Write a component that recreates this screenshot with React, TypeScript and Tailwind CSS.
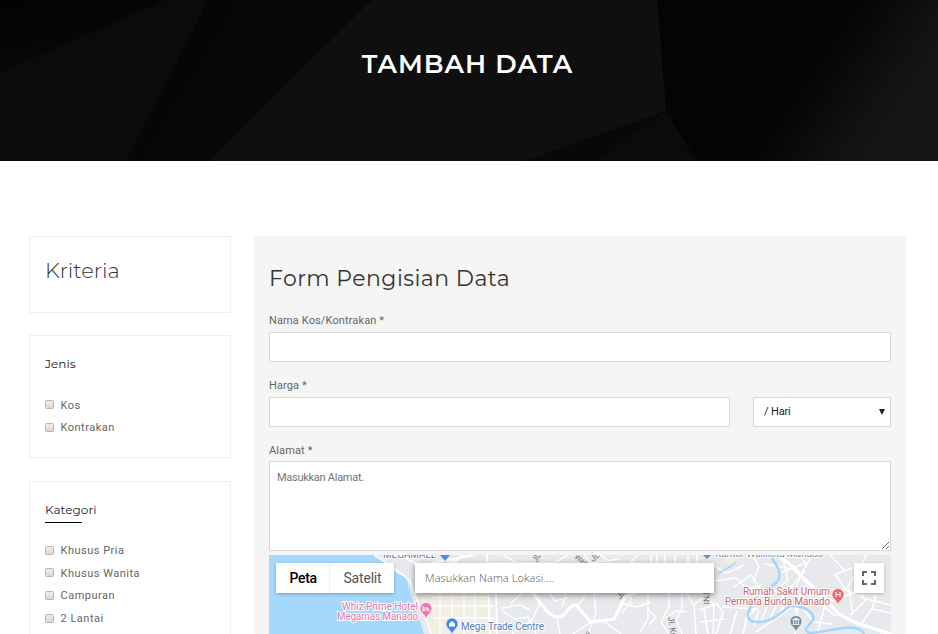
import React from "react";

const heading = "font-['Montserrat','Inter',sans-serif]";

function Backdrop() {
  return (
    <svg className="absolute inset-0 h-full w-full" viewBox="0 0 938 161" preserveAspectRatio="none" aria-hidden="true">
      <defs>
        <linearGradient id="leftFold" x1="0" y1="0" x2="0.35" y2="1">
          <stop offset="0" stopColor="#030303" />
          <stop offset="1" stopColor="#080808" />
        </linearGradient>
        <linearGradient id="band" x1="0" y1="0" x2="1" y2="0.4">
          <stop offset="0" stopColor="#040404" />
          <stop offset="1" stopColor="#090909" />
        </linearGradient>
        <linearGradient id="rightFold" gradientUnits="userSpaceOnUse" x1="805" y1="62" x2="900" y2="127">
          <stop offset="0" stopColor="#040404" />
          <stop offset="0.2" stopColor="#070707" />
          <stop offset="0.7" stopColor="#121212" />
          <stop offset="1" stopColor="#161616" />
        </linearGradient>
      </defs>
      <rect width="938" height="161" fill="#0f0f0f" />
      <path d="M0 0H210L126 161H0Z" fill="#0b0b0b" />
      <path d="M0 0H165L100 29L0 73Z" fill="url(#leftFold)" />
      <path d="M208 0H372L209 161H126Z" fill="url(#band)" />
      <path d="M657 0H938V161H696L666 111Z" fill="url(#rightFold)" />
      <path d="M666 111L696 161H525Z" fill="#0b0b0b" />
      <path d="M666 111L595 161H525Z" fill="#080808" />
    </svg>
  );
}

function Check({ label }: { label: string }) {
  return (
    <label className="flex h-[22.6px] items-center font-[Roboto] text-[11px] tracking-[0.5px] text-[#666]">
      <span className="mb-[2px] mr-[6.5px] h-[9px] w-[9px] rounded-[1.5px] border border-[#b4b4b4] bg-gradient-to-b from-[#eee] to-[#d9d9d9]" />
      {label}
    </label>
  );
}

function Pin({ x, y, color, children }: { x: number; y: number; color: string; children?: React.ReactNode }) {
  return (
    <g transform={`translate(${x} ${y})`}>
      <path d="M0 4.5C-1-1-6-2-6-6.5A6 6 0 0 1 6-6.5C6-2 1-1 0 4.5Z" fill={color} stroke="#fff" strokeWidth=".6" />
      {children}
    </g>
  );
}

function MapView() {
  return (
    <svg className="block h-[79px] w-[622px]" viewBox="269 555 622 79" fontFamily="Roboto, sans-serif" aria-label="Manado">
      <rect x="269" y="555" width="622" height="79" fill="#e8e9ec" />
      <path d="M269 555H374C382 560 389 565 396 573L407 578C409 594 417 610 424 634H269Z" fill="#a5d8fd" />
      <path d="M419 592L489 593L498 634H429Z" fill="#f1eee3" />
      <path d="M724 555h13l-2 6-10 1z" fill="#faf0cc" />
      <g fill="none" stroke="#fff" strokeWidth="2">
        <path d="M374 555C393 568 407 576 411 583C414 600 427 616 431 634" strokeWidth="1.4" />
        <path d="M402 555C422 572 447 567 464 555M431 563L475 555M462 555L450 568M487 555L490 634M496 590L497 634" />
        <path d="M432 597H488M426 606H494M434 618H494M440 590V634M452 590V634M464 590V634M475 590V634" strokeWidth="1.3" />
        <path d="M488 563H554L568 555M503 555L517 563M584 555L591 563L619 559M600 555L613 564M629 564L638 555M651 555V564M657 555V564M665 555V564M675 555V564M688 555V564M697 555V564" strokeWidth="1.5" />
        <path d="M532 592C541 602 547 616 557 617S567 605 576 605L591 622L614 619L625 597L643 589" strokeWidth="3.2" />
        <path d="M594 592L596 613L588 634M502 608L520 605L530 610M501 610L515 619L528 617L536 634M549 592L555 601L568 598M566 593L562 607M522 593L510 604M540 603L532 620L512 634M557 617L560 634M578 605L585 596M591 622L573 634M604 621L621 634M620 603L637 607L651 602M632 592L630 604L621 613M648 592V619L640 632M669 591V606L661 622L669 634M682 591V608L676 620L682 634M647 608L656 617L649 625M664 619L676 611L687 612M687 593L693 605L704 597M694 605L696 634M704 596L714 604L713 634" strokeWidth="1.4" />
        <path d="M708 563L727 573L744 565M714 581L736 578L747 589L762 585M734 587L751 575L763 593M752 555L759 566L753 582M782 555L788 580L774 592M765 564L797 570L821 598M778 574L806 563L799 555M805 571L780 600M812 555L803 571L796 587M787 588L800 596L794 611" strokeWidth="1.4" />
        <path d="M777 555C790 563 797 571 805 580C818 591 829 604 839 614L856 623L891 634" strokeWidth="3.5" />
        <path d="M819 590L849 590L853 615M829 602L861 590M835 574L846 590L866 599L891 605M846 590L855 574M858 580L865 601L850 615M866 555L862 565L835 574M830 555L844 570M876 596L872 609L891 613M872 609L861 624M825 606L817 634" strokeWidth="1.5" />
        <path d="M699 610L717 604L723 613L716 634M700 622L725 619M704 610L708 634M722 607L756 609L746 618M737 611L730 634M748 611L743 634M759 610L754 625M767 607L761 622M777 604L770 619M787 601L778 616M756 632L799 602M798 602L795 634M804 610L814 622L832 624M823 606L836 616" strokeWidth="1.7" />
      </g>
      <g fill="none" stroke="#a5d5fb" strokeWidth="2.5">
        <path d="M769 554C775 563 784 573 777 582C767 592 751 593 755 603M755 602C745 613 744 622 759 622C773 622 780 612 791 606C803 605 815 612 813 620C807 628 801 630 811 634M811 633C837 630 857 622 864 634" />
        <path d="M718 574C724 569 732 567 736 562" strokeWidth="1.6" />
      </g>
      <g fontSize="8.5" fill="#747474">
        <text x="537" y="563" transform="rotate(-65 537 563)">JL</text>
        <text x="574" y="558" fontSize="7.5" transform="rotate(35 574 558)">Wes</text>
        <text x="593" y="562" transform="rotate(-40 593 562)">JL</text>
        <text x="620" y="600" transform="rotate(-48 620 600)">Jl.</text>
        <text x="703" y="591" transform="rotate(88 703 591)">TNI</text>
        <text x="668" y="617" transform="rotate(82 668 617)">Jl. Kul</text>
        <text x="587" y="640" transform="rotate(-40 587 640)">Jl.</text>
      </g>
      <g fontSize="10" stroke="#fff" strokeWidth="2" paintOrder="stroke" strokeLinejoin="round">
        <text x="383" y="558" textLength="53" lengthAdjust="spacingAndGlyphs" fontSize="9.5" fill="#4b78ac">MEGAMALL</text>
        <text x="715" y="556.5" textLength="108" lengthAdjust="spacingAndGlyphs" fontSize="9.5" fill="#758997">Kantor Walikota Manado</text>
        <text x="342" y="610" textLength="76" lengthAdjust="spacingAndGlyphs" fill="#e276aa">Whiz Prime Hotel</text>
        <text x="337" y="620" textLength="81" lengthAdjust="spacingAndGlyphs" fill="#e276aa">Megamas Manado</text>
        <text x="461" y="629.5" textLength="83" lengthAdjust="spacingAndGlyphs" fill="#4e7db8">Mega Trade Centre</text>
        <text x="743" y="595" textLength="87" lengthAdjust="spacingAndGlyphs" fill="#c5646b">Rumah Sakit Umum</text>
        <text x="725" y="605" textLength="105" lengthAdjust="spacingAndGlyphs" fill="#c5646b">Permata Bunda Manado</text>
      </g>
      <path d="M440 555H450L445 561Z" fill="#4d8be8" />
      <path d="M703 555H711L707 559Z" fill="#75909f" />
      <Pin x={426} y={615} color="#ef78b2">
        <path d="M-3-9V-3.5M-3-5H3V-3.5M-2-7H2V-5" fill="none" stroke="#fff" />
      </Pin>
      <Pin x={452} y={630.5} color="#3f86e6">
        <path d="M-3-7.5H3V-4H-3ZM-1.5-7.5V-9H1.5V-7.5" fill="#fff" />
      </Pin>
      <Pin x={838} y={601} color="#ed6870">
        <path d="M-2-9V-4M2-9V-4M-2-6.5H2" stroke="#fff" />
      </Pin>
      <Pin x={796} y={628} color="#708e9d">
        <path d="M-3.5-8L0-10L3.5-8ZM-2.5-7V-4M0-7V-4M2.5-7V-4M-3.5-3.5H3.5" fill="#fff" stroke="#fff" strokeWidth=".8" />
      </Pin>
    </svg>
  );
}

const labelClass = "block h-3 font-[Roboto] text-[11px] leading-3 tracking-[0.12px] text-[#666]";
const fieldClass = "block h-[30px] border border-[#d9d9d9] bg-white outline-none";

export default function App() {
  return (
    <div className="h-[634px] w-[938px] overflow-hidden bg-white">
      <header className="relative flex h-[161px] justify-center bg-[#101010] pr-[3px] pt-12">
        <Backdrop />
        <h1 className={`${heading} relative h-8 whitespace-nowrap text-[26px] font-semibold leading-8 tracking-[1px] text-white`}>TAMBAH DATA</h1>
      </header>
      <main className="flex items-start gap-[23px] pl-[29px] pt-[75px]">
        <aside className="w-[202px] shrink-0">
          <section className="h-[77px] border border-[#eee] pl-[15px] pt-5">
            <h2 className={`${heading} text-[21px] font-light leading-7 tracking-[0.1px] text-[#333]`}>Kriteria</h2>
          </section>
          <section className="mt-[22px] h-[123px] border border-[#eee] pl-[15px] pt-5">
            <h3 className={`${heading} mb-[22.6px] text-[12px] leading-4 tracking-[0.05px] text-[#222]`}>Jenis</h3>
            <Check label="Kos" />
            <Check label="Kontrakan" />
          </section>
          <section className="mt-[23px] h-[200px] border border-[#eee] pl-[15px] pt-5">
            <h3 className={`${heading} text-[12px] leading-4 tracking-[0.05px] text-[#222]`}>Kategori</h3>
            <div className="mb-[17px] mt-1 h-[1px] w-[37px] bg-black" />
            <Check label="Khusus Pria" />
            <Check label="Khusus Wanita" />
            <Check label="Campuran" />
            <Check label="2 Lantai" />
          </section>
        </aside>
        <form className="h-[398px] w-[652px] shrink-0 bg-[#f5f5f5] px-[15px] pt-[27px]">
          <h2 className={`${heading} mb-4 h-8 whitespace-nowrap text-[22px] leading-8 tracking-[0.45px] text-[#333]`}>Form Pengisian Data</h2>
          <label className={`${labelClass} pt-1`}>Nama Kos/Kontrakan *</label>
          <input className={`${fieldClass} mt-[9px] w-full`} />
          <label className={`${labelClass} mt-[18px]`}>Harga *</label>
          <div className="mt-[5px] flex justify-between">
            <input className={`${fieldClass} w-[461px]`} />
            <div className="flex h-[30px] w-[138px] items-center justify-between border border-[#d9d9d9] bg-white pl-[10px] pr-[5px] font-[Roboto] text-[11px] tracking-[-0.15px] text-[#222]">
              <span>/ Hari</span>
              <svg className="h-[6px] w-[6px]" viewBox="0 0 6 6"><path d="M0 0H6L3 6Z" fill="#222" /></svg>
            </div>
          </div>
          <label className={`${labelClass} mt-[18px]`}>Alamat *</label>
          <textarea className="mt-[4px] block h-[90px] w-full resize-y border border-[#d9d9d9] bg-white px-[7px] pt-[9px] font-[Roboto] text-[11px] leading-[14px] tracking-[-0.27px] outline-none placeholder:text-[#757575]" placeholder="Masukkan Alamat." />
          <div className="relative mt-1 h-[79px] overflow-hidden">
            <MapView />
            <div className="absolute left-[7px] top-2 flex h-[30px] w-[118px] bg-white font-[Roboto] text-[14px] leading-[30px] tracking-[-0.2px] shadow-[0_1px_3px_rgba(0,0,0,.3)]">
              <span className="w-[54px] border-r border-[#eee] pl-[13.5px] font-medium tracking-[-0.3px] text-black">Peta</span>
              <span className="flex-1 pl-[13.5px] text-[#565656]">Satelit</span>
            </div>
            <input className="absolute left-[146px] top-2 h-[30px] w-[299px] bg-white px-[10px] pb-[2px] font-['Open_Sans'] text-[11px] font-light tracking-[0.13px] text-[#444] shadow-[0_2px_6px_rgba(0,0,0,.45)] outline-none placeholder:text-[#555]" placeholder="Masukkan Nama Lokasi...." />
            <div className="absolute right-[7px] top-2 flex h-[30px] w-[30px] items-center justify-center bg-white shadow-[0_1px_3px_rgba(0,0,0,.25)]">
              <svg className="h-[14px] w-[14px]" viewBox="0 0 14 14" fill="none" stroke="#666" strokeWidth="2"><path d="M1 5V1H5M9 1H13V5M1 9V13H5M13 9V13H9" /></svg>
            </div>
          </div>
        </form>
      </main>
    </div>
  );
}
